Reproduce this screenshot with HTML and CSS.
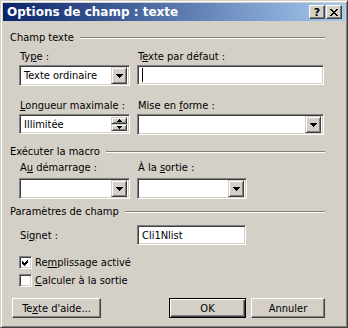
FILE: index.html
```html
<!DOCTYPE html>
<html lang="fr">
<head>
    <meta charset="UTF-8">
    <title>Options de champ : texte</title>
    <link rel="stylesheet" href="styles.css">
</head>
<body>
    <div class="window">
        <div class="titlebar">
            <span class="title">Options de champ : texte</span>
            <span class="cap-btn help">?</span>
            <span class="cap-btn close">
                <svg width="8" height="7" viewBox="0 0 8 7"><path d="M0 0h2l2 2.2L6 0h2L5 3.5 8 7H6L4 4.8 2 7H0l3-3.5z"/></svg>
            </span>
        </div>

        <div class="content">
            <div class="group-title"><span>Champ texte</span><span class="rule"></span></div>

            <div class="field-row wide">
                <label class="lbl">Ty<u>p</u>e :</label>
                <label class="lbl">T<u>e</u>xte par défaut :</label>
                <div class="field combo"><span class="value">Texte ordinaire</span><span class="drop"><svg width="7" height="4" viewBox="0 0 7 4"><path d="M0 0h7L3.5 4z"/></svg></span></div>
                <div class="field edit"><span class="caret"></span></div>
            </div>
            <div class="field-row wide second">
                <label class="lbl"><u>L</u>ongueur maximale :</label>
                <label class="lbl">Mise en <u>f</u>orme :</label>
                <div class="field spin">
                    <span class="value">Illimitée</span>
                    <span class="spin-btns">
                        <span class="spin-btn"><svg width="5" height="3" viewBox="0 0 5 3"><path d="M2.5 0L5 3H0z"/></svg></span>
                        <span class="spin-btn"><svg width="5" height="3" viewBox="0 0 5 3"><path d="M0 0h5L2.5 3z"/></svg></span>
                    </span>
                </div>
                <div class="field combo"><span class="value"></span><span class="drop"><svg width="7" height="4" viewBox="0 0 7 4"><path d="M0 0h7L3.5 4z"/></svg></span></div>
            </div>

            <div class="group-title macro"><span>Exécuter la macro</span><span class="rule"></span></div>

            <div class="field-row narrow">
                <label class="lbl">A<u>u</u> démarrage :</label>
                <label class="lbl">À la <u>s</u>ortie :</label>
                <div class="field combo"><span class="value"></span><span class="drop"><svg width="7" height="4" viewBox="0 0 7 4"><path d="M0 0h7L3.5 4z"/></svg></span></div>
                <div class="field combo"><span class="value"></span><span class="drop"><svg width="7" height="4" viewBox="0 0 7 4"><path d="M0 0h7L3.5 4z"/></svg></span></div>
            </div>

            <div class="group-title params"><span>Paramètres de champ</span><span class="rule"></span></div>

            <div class="signet-row">
                <label class="lbl">Si<u>g</u>net :</label>
                <div class="field edit signet"><span class="value">Cli1Nlist</span></div>
            </div>

            <div class="check-row first">
                <span class="checkbox"><svg width="9" height="9" viewBox="0 0 9 9"><path d="M1 3l2 2 4-4v3L3 8 1 6z"/></svg></span>
                <span>Re<u>m</u>plissage activé</span>
            </div>
            <div class="check-row">
                <span class="checkbox"></span>
                <span><u>C</u>alculer à la sortie</span>
            </div>

            <div class="buttons">
                <button class="btn help-btn">Te<u>x</u>te d'aide...</button>
                <button class="btn ok">OK</button>
                <button class="btn cancel">Annuler</button>
            </div>
        </div>
    </div>
</body>
</html>
```

FILE: styles.css
```css
body {
    margin: 0;
    font-family: Tahoma, "DejaVu Sans Condensed", "Liberation Sans", sans-serif;
    font-size: 11px;
    color: #000;
}

u {
    text-decoration-thickness: 1px;
    text-underline-offset: 1px;
}

.window {
    width: 348px;
    height: 328px;
    box-sizing: border-box;
    background: #d4d0c8;
    border: 1px solid;
    border-color: #d4d0c8 #404040 #404040 #d4d0c8;
    box-shadow: inset 1px 1px #fff, inset -1px -1px #808080;
    padding: 2px;
}

/* title bar */
.titlebar {
    height: 18px;
    display: flex;
    align-items: center;
    padding: 0 3px 0 4px;
    background: linear-gradient(to right, #0a246a, #a6caf0);
    color: #fff;
}

.title {
    flex: 1;
    line-height: 18px;
    font-family: "DejaVu Sans", sans-serif;
    font-size: 12px;
    font-weight: bold;
}

.cap-btn {
    width: 16px;
    height: 14px;
    box-sizing: border-box;
    display: flex;
    align-items: center;
    justify-content: center;
    background: #d4d0c8;
    color: #000;
    border: 1px solid;
    border-color: #fff #404040 #404040 #fff;
    box-shadow: inset -1px -1px #808080;
    font-family: "DejaVu Sans", sans-serif;
    font-size: 11px;
    font-weight: bold;
    line-height: 1;
}

.cap-btn + .cap-btn {
    margin-left: 1px;
}

/* body */
.content {
    padding: 10px 0 0 7px;
}

.group-title {
    width: 315px;
    height: 13px;
    display: flex;
    line-height: 13px;
}

.group-title .rule {
    flex: 1;
    height: 0;
    margin: 6px 0 0 6px;
    border-top: 1px solid #808080;
    border-bottom: 1px solid #fff;
}

.group-title.macro {
    margin-top: 10px;
}

.group-title.params {
    margin-top: 6px;
}

.lbl {
    line-height: 13px;
    padding-left: 1px;
    white-space: nowrap;
}

.field-row {
    display: grid;
    grid-template-rows: 13px auto;
    column-gap: 7px;
    row-gap: 2px;
    margin-left: 9px;
}

.field-row.wide {
    grid-template-columns: 111px 187px;
    margin-top: 6px;
}

.field-row.wide.second {
    margin-top: 13px;
}

.field-row.narrow {
    grid-template-columns: 111px 110px;
    row-gap: 4px;
    margin-top: 3px;
}

/* sunken fields */
.field {
    height: 20px;
    box-sizing: border-box;
    display: flex;
    align-items: center;
    background: #fff;
    border: 1px solid;
    border-color: #808080 #fff #fff #808080;
    box-shadow: inset 1px 1px #404040, inset -1px -1px #d4d0c8;
    padding: 2px;
}

.field.combo {
    height: 21px;
}

.field .value {
    flex: 1;
    padding-left: 2px;
    line-height: 13px;
    white-space: nowrap;
}

.caret {
    width: 1px;
    height: 14px;
    margin-left: 2px;
    background: #000;
}

.drop {
    width: 16px;
    height: 17px;
    box-sizing: border-box;
    display: flex;
    align-items: center;
    justify-content: center;
    background: #d4d0c8;
    border: 1px solid;
    border-color: #d4d0c8 #404040 #404040 #d4d0c8;
    box-shadow: inset 1px 1px #fff, inset -1px -1px #808080;
}

.spin-btns {
    display: flex;
    flex-direction: column;
    align-self: stretch;
}

.spin-btn {
    width: 16px;
    flex: 1;
    box-sizing: border-box;
    display: flex;
    align-items: center;
    justify-content: center;
    background: #d4d0c8;
    border: 1px solid;
    border-color: #d4d0c8 #404040 #404040 #d4d0c8;
    box-shadow: inset 1px 1px #fff, inset -1px -1px #808080;
}

svg {
    display: block;
    shape-rendering: crispEdges;
}

/* signet + checkboxes */
.signet-row {
    display: flex;
    align-items: center;
    margin: 7px 0 0 9px;
}

.signet-row .lbl {
    width: 118px;
    box-sizing: border-box;
}

.field.signet {
    width: 109px;
}

.check-row {
    display: flex;
    align-items: center;
    height: 13px;
    line-height: 13px;
    margin: 5px 0 0 9px;
}

.check-row.first {
    margin-top: 11px;
}

.checkbox {
    width: 13px;
    height: 13px;
    box-sizing: border-box;
    display: flex;
    align-items: center;
    justify-content: center;
    margin-right: 3px;
    background: #fff;
    border: 1px solid;
    border-color: #808080 #fff #fff #808080;
    box-shadow: inset 1px 1px #404040, inset -1px -1px #d4d0c8;
}

/* buttons */
.buttons {
    display: flex;
    margin: 11px 0 0 2px;
}

.btn {
    height: 20px;
    box-sizing: border-box;
    padding: 0;
    font: inherit;
    color: #000;
    background: #d4d0c8;
    border: 1px solid;
    border-color: #fff #404040 #404040 #fff;
    box-shadow: inset -1px -1px #808080;
}

.help-btn {
    width: 89px;
}

.ok {
    width: 77px;
    margin-left: 68px;
    border-color: #000;
    box-shadow: inset 1px 1px #fff, inset -1px -1px #404040, inset -2px -2px #808080;
}

.cancel {
    width: 74px;
    margin-left: 5px;
}
```
